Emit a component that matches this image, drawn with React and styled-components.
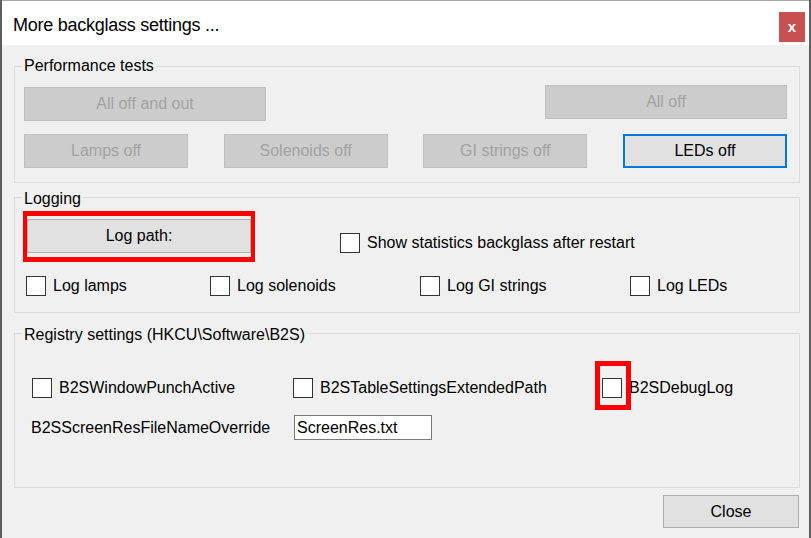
import React from 'react';
import styled, { createGlobalStyle } from 'styled-components';

const Global = createGlobalStyle`
  html, body { margin: 0; padding: 0; background: #5e5e5e; }
  body {
    width: 811px; height: 538px; overflow: hidden;
    font-family: "Liberation Sans", Arial, sans-serif;
  }
  #root { height: 100%; }
`;

const Window = styled.div`
  box-sizing: border-box;
  height: 538px;
  margin: 0 2px;
  border-top: 1px solid #a8a8a8;
  background: #f0f0f0;
  display: flex;
  flex-direction: column;
`;

const TitleBar = styled.div`
  height: 44px;
  flex: none;
  background: #ffffff;
  display: flex;
  align-items: flex-start;
  padding-left: 11px;
`;

const Title = styled.div`
  margin-top: 14px;
  font-size: 18px;
  line-height: 21px;
  letter-spacing: -0.25px;
  color: #000;
`;

const CloseX = styled.div`
  margin: 11px 4px 0 auto;
  width: 26px;
  height: 30px;
  background: #c75050;
  color: #fff;
  font-weight: bold;
  font-size: 15px;
  display: flex;
  align-items: center;
  justify-content: center;
  padding-bottom: 2px;
  box-sizing: border-box;
`;

const Client = styled.div`
  flex: 1;
  display: flex;
  flex-direction: column;
  padding: 12px 9px 0 12px;
`;

const Group = styled.fieldset`
  margin: ${p => p.$mt}px 0 0 0;
  padding: ${p => p.$pt}px 12px ${p => p.$pb}px 9px;
  border: 1px solid #dcdcdc;
  min-width: 0;
`;

const Legend = styled.legend`
  padding: ${p => p.$lift || 0}px 2px 0;
  margin-left: -2px;
  font-size: 16px;
  line-height: 18px;
  color: #000;
`;

const Button = styled.button`
  box-sizing: border-box;
  width: ${p => p.$w}px;
  height: ${p => p.$h || 34}px;
  margin: ${p => p.$shift || 0}px 0 0 0;
  padding: 0;
  font-family: "Liberation Sans", Arial, sans-serif;
  font-size: 16px;
  color: ${p => (p.$kind === 'disabled' ? '#a2a2a2' : '#000')};
  background: ${p => (p.$kind === 'disabled' ? '#cccccc' : '#e1e1e1')};
  border: ${p =>
    p.$kind === 'focused'
      ? '2px solid #0078d7'
      : p.$kind === 'disabled'
      ? '1px solid #bfbfbf'
      : '1px solid #adadad'};
`;

const PerfTop = styled.div`
  display: flex;
  justify-content: space-between;
  align-items: flex-start;
`;

const PerfBottom = styled.div`
  display: grid;
  grid-template-columns: repeat(4, 164px);
  justify-content: space-between;
  margin-top: 13px;
`;

const LogTop = styled.div`
  display: flex;
  align-items: flex-start;
  margin-left: -1px;
`;

const Highlight = styled.div`
  border-style: solid;
  border-color: #ff0000;
  border-width: 5px 4px;
  padding: 3px 0 4px;
`;

const LogBottom = styled.div`
  display: grid;
  grid-template-columns: 184px 210px 210px auto;
  margin-top: 14px;
  padding-left: 2px;
`;

const CheckLabel = styled.label`
  display: flex;
  align-items: center;
  gap: 7px;
  height: 20px;
  font-size: 16px;
  line-height: 18px;
  color: #000;
  white-space: nowrap;
  margin: ${p => p.$mt || 0}px 0 0 ${p => p.$ml || 0}px;
`;

const Box = styled.span`
  position: relative;
  box-sizing: border-box;
  width: 20px;
  height: 20px;
  flex: none;
  background: #fff;
  border: 1px solid #333333;
`;

const Mark = styled.span`
  position: absolute;
  left: -8px;
  top: -18px;
  width: 36px;
  height: 49px;
  box-sizing: border-box;
  border: 5px solid #ff0000;
  z-index: 1;
  pointer-events: none;
`;

const RegGrid = styled.div`
  display: grid;
  grid-template-columns: 261px 309px auto;
  row-gap: 17px;
  align-items: center;
  padding-left: 8px;
`;

const FieldLabel = styled.span`
  font-size: 16px;
  line-height: 18px;
  margin-left: -1px;
  color: #000;
`;

const TextBox = styled.div`
  box-sizing: border-box;
  width: 138px;
  height: 25px;
  margin-left: 1px;
  background: #fff;
  border: 1px solid #7a7a7a;
  padding-left: 2px;
  font-size: 16px;
  line-height: 23px;
  color: #000;
`;

const Footer = styled.div`
  display: flex;
  justify-content: flex-end;
  margin-top: 7px;
  padding-right: 1px;
`;

const Check = ({ label, mt, ml, marked }) => (
  <CheckLabel $mt={mt} $ml={ml}>
    <Box>{marked && <Mark />}</Box>
    <span>{label}</span>
  </CheckLabel>
);

export default function App() {
  return (
    <>
      <Global />
      <Window>
        <TitleBar>
          <Title>More backglass settings ...</Title>
          <CloseX>x</CloseX>
        </TitleBar>
        <Client>
          <Group $mt={0} $pt={10} $pb={14}>
            <Legend>Performance tests</Legend>
            <PerfTop>
              <Button $kind="disabled" $w={242} $shift={2}>All off and out</Button>
              <Button $kind="disabled" $w={242}>All off</Button>
            </PerfTop>
            <PerfBottom>
              <Button $kind="disabled" $w={164}>Lamps off</Button>
              <Button $kind="disabled" $w={164}>Solenoids off</Button>
              <Button $kind="disabled" $w={164}>GI strings off</Button>
              <Button $kind="focused" $w={164}>LEDs off</Button>
            </PerfBottom>
          </Group>

          <Group $mt={3} $pt={3} $pb={16}>
            <Legend $lift={4}>Logging</Legend>
            <LogTop>
              <Highlight>
                <Button $kind="normal" $w={224}>Log path:</Button>
              </Highlight>
              <Check label="Show statistics backglass after restart" mt={22} ml={85} />
            </LogTop>
            <LogBottom>
              <Check label="Log lamps" />
              <Check label="Log solenoids" />
              <Check label="Log GI strings" />
              <Check label="Log LEDs" />
            </LogBottom>
          </Group>

          <Group $mt={9} $pt={34} $pb={47}>
            <Legend $lift={4}>Registry settings (HKCU\Software\B2S)</Legend>
            <RegGrid>
              <Check label="B2SWindowPunchActive" />
              <Check label="B2STableSettingsExtendedPath" />
              <Check label="B2SDebugLog" marked />
              <FieldLabel>B2SScreenResFileNameOverride</FieldLabel>
              <TextBox>ScreenRes.txt</TextBox>
            </RegGrid>
          </Group>

          <Footer>
            <Button $kind="normal" $w={136} $h={33}>Close</Button>
          </Footer>
        </Client>
      </Window>
    </>
  );
}
